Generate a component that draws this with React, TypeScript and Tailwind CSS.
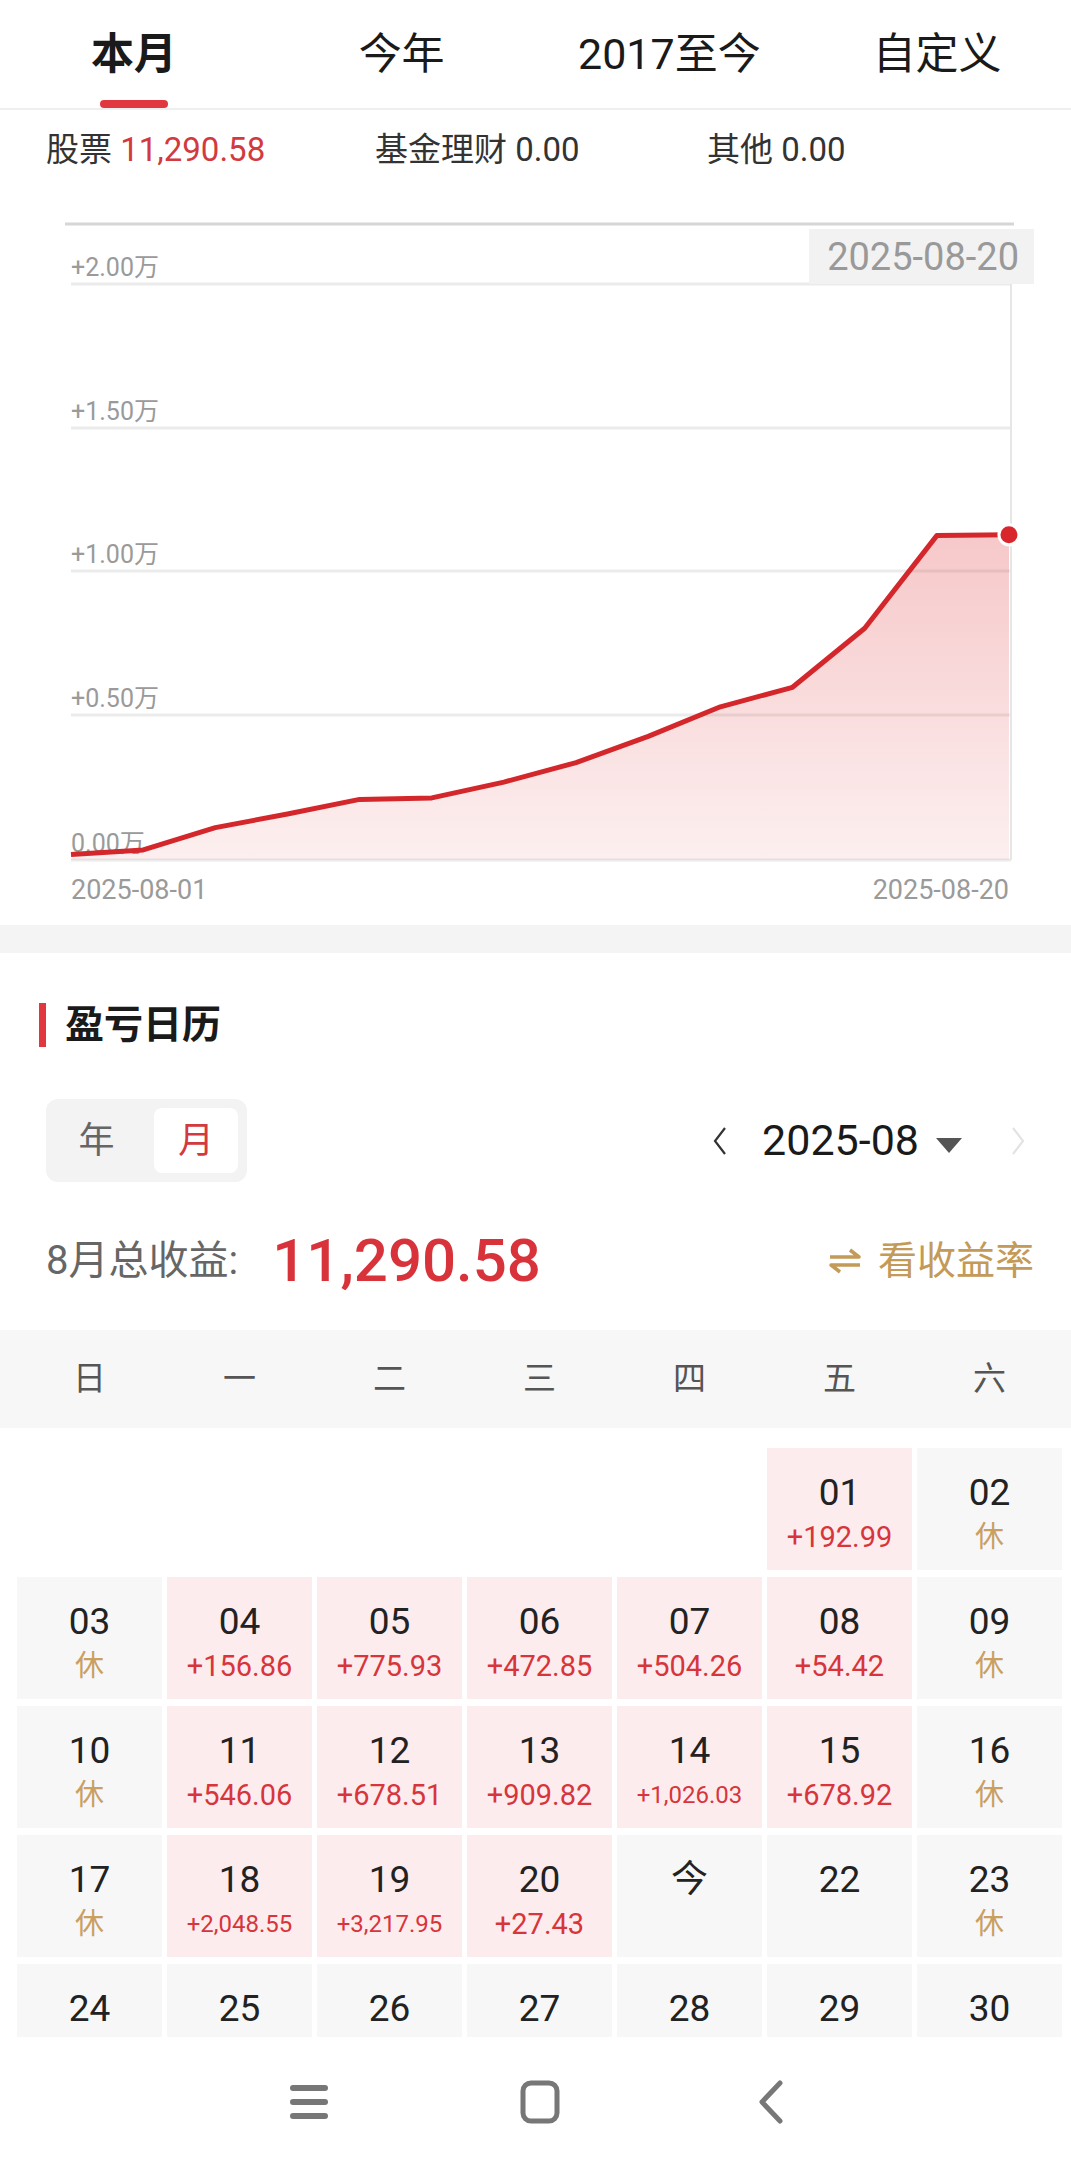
import React from "react";

const FONT = { fontFamily: 'Roboto, "Noto Sans CJK SC", sans-serif' };

const tabs = ["本月", "今年", "2017至今", "自定义"];

// daily profit for each trading day in Aug 2025
const profits: Record<number, string> = {
  1: "+192.99",
  4: "+156.86",
  5: "+775.93",
  6: "+472.85",
  7: "+504.26",
  8: "+54.42",
  11: "+546.06",
  12: "+678.51",
  13: "+909.82",
  14: "+1,026.03",
  15: "+678.92",
  18: "+2,048.55",
  19: "+3,217.95",
  20: "+27.43",
};

const weekdays = ["日", "一", "二", "三", "四", "五", "六"];

function Chart() {
  const values = Object.values(profits).map((v) => parseFloat(v.replace(/[+,]/g, "")));
  let sum = 0;
  const cum = values.map((v) => (sum += v));
  const baseY = 670;
  const toY = (v: number) => baseY - (v / 20000) * 576;
  const pts = cum.map((v, i) => [71 + i * 72.15, toY(v)] as const);
  const line = pts.map(([x, y], i) => `${i ? "L" : "M"}${x.toFixed(1)},${y.toFixed(1)}`).join(" ");
  const area = `${line} L${pts[pts.length - 1][0]},${baseY} L71,${baseY} Z`;
  const grid = [
    { y: 94, label: "+2.00万" },
    { y: 238, label: "+1.50万" },
    { y: 381, label: "+1.00万" },
    { y: 525, label: "+0.50万" },
    { y: 670, label: "0.00万" },
  ];
  const last = pts[pts.length - 1];

  return (
    <svg width="1071" height="735" viewBox="0 0 1071 735" className="block" style={FONT}>
      <defs>
        <linearGradient id="fill" x1="0" y1="0" x2="0" y2="1">
          <stop offset="0" stopColor="#e03a3e" stopOpacity="0.28" />
          <stop offset="1" stopColor="#e03a3e" stopOpacity="0.08" />
        </linearGradient>
      </defs>
      <line x1="65" y1="34" x2="1014" y2="34" stroke="#d6d6d6" strokeWidth="3" />
      {grid.map((g) => (
        <g key={g.label}>
          <line x1="71" y1={g.y} x2="1011" y2={g.y} stroke="#ebebeb" strokeWidth="3" />
          <text x="71" y={g.y - 8} fontSize="25" fill="#9a9a9a">
            {g.label}
          </text>
        </g>
      ))}
      <line x1="1011" y1="94" x2="1011" y2="670" stroke="#e6e6e6" strokeWidth="2" />
      <path d={area} fill="url(#fill)" />
      <path d={line} fill="none" stroke="#d4272b" strokeWidth="5" strokeLinejoin="round" />
      <circle cx={last[0]} cy={last[1]} r="10" fill="#d9262c" stroke="#ffffff" strokeWidth="3" />
      <rect x="809" y="39" width="225" height="55" fill="#f2f2f2" />
      <text x="1019" y="80" fontSize="38" fill="#999999" textAnchor="end">
        2025-08-20
      </text>
      <text x="71" y="709" fontSize="27" fill="#9a9a9a">
        2025-08-01
      </text>
      <text x="1009" y="709" fontSize="27" fill="#9a9a9a" textAnchor="end">
        2025-08-20
      </text>
    </svg>
  );
}

function DayCell({ day }: { day: number | null }) {
  if (day === null) return <div className="h-[122px]" />;
  const profit = profits[day];
  const weekday = (day + 4) % 7;
  const rest = (weekday === 0 || weekday === 6) && day < 24;
  const today = day === 21;
  const small = profit && profit.length > 8;

  return (
    <div
      className={`flex h-[122px] flex-col items-center pt-[27px] ${profit ? "bg-[#fdeced]" : "bg-[#f7f7f7]"}`}
    >
      <div className="flex h-[34px] items-center text-[37px] leading-none text-[#222]">
        {today ? "今" : String(day).padStart(2, "0")}
      </div>
      <div className="mt-[10px] flex h-[36px] items-center leading-none">
        {profit && (
          <span className={`${small ? "text-[24px]" : "text-[29px]"} text-[#d7353b]`}>{profit}</span>
        )}
        {!profit && rest && <span className="text-[29px] text-[#c9a062]">休</span>}
      </div>
    </div>
  );
}

export default function App() {
  const cells: (number | null)[] = [null, null, null, null, null];
  for (let d = 1; d <= 30; d++) cells.push(d);

  return (
    <div className="flex h-[2173px] w-[1071px] flex-col overflow-hidden bg-white" style={FONT}>
      <div className="min-h-0 flex-1 overflow-hidden">
        {/* period tabs */}
        <div className="grid h-[110px] grid-cols-4 border-b-2 border-[#efefef]">
          {tabs.map((t, i) => (
            <div key={t} className="flex flex-col items-center pt-[33px]">
              <span
                className={`text-[43px] leading-none text-[#1a1a1a] ${i === 0 ? "font-bold" : ""}`}
              >
                {t}
              </span>
              {i === 0 && <span className="mt-auto h-[8px] w-[68px] rounded-full bg-[#e0383e]" />}
            </div>
          ))}
        </div>

        {/* breakdown */}
        <div className="flex h-[80px] items-center pl-[46px] text-[33px] text-[#333]">
          <div className="w-[329px]">
            股票 <span className="text-[#d23a40]">11,290.58</span>
          </div>
          <div className="w-[332px]">基金理财 0.00</div>
          <div>其他 0.00</div>
        </div>

        <Chart />

        <div className="h-[28px] bg-[#f4f4f4]" />

        {/* calendar title */}
        <div className="flex items-center gap-[19px] pb-[52px] pl-[39px] pt-[50px]">
          <span className="h-[44px] w-[7px] bg-[#e0383e]" />
          <span className="text-[39px] font-bold leading-none text-[#1a1a1a]">盈亏日历</span>
        </div>

        {/* year / month switch */}
        <div className="flex h-[83px] items-center justify-between pl-[46px] pr-[45px]">
          <div className="flex h-[83px] w-[201px] rounded-[12px] bg-[#f3f3f3] p-[9px]">
            <span className="flex flex-1 items-center justify-center pr-[16px] text-[36px] text-[#666]">年</span>
            <span className="flex w-[84px] items-center justify-center rounded-[8px] bg-white text-[36px] text-[#d23a40]">
              月
            </span>
          </div>
          <div className="flex items-center">
            <svg width="16" height="32" viewBox="0 0 16 32">
              <polyline points="13,3 3,16 13,29" fill="none" stroke="#333" strokeWidth="2.2" />
            </svg>
            <span className="ml-[34px] text-[43px] leading-none text-[#1a1a1a]">2025-08</span>
            <svg width="30" height="20" viewBox="0 0 30 20" className="ml-[15px] mt-[8px]">
              <polygon points="2,3 28,3 15,18" fill="#555" />
            </svg>
            <svg width="16" height="32" viewBox="0 0 16 32" className="ml-[46px]">
              <polyline points="3,3 13,16 3,29" fill="none" stroke="#e3e3e3" strokeWidth="2.2" />
            </svg>
          </div>
        </div>

        {/* month total */}
        <div className="flex h-[148px] items-center justify-between pl-[46px] pr-[37px] pt-[10px]">
          <div className="flex items-center">
            <span className="text-[40px] text-[#666]">8月总收益:</span>
            <span className="ml-[34px] text-[60px] font-medium leading-none text-[#d8323a]">11,290.58</span>
          </div>
          <div className="flex items-center text-[#c39a57]">
            <svg width="34" height="28" viewBox="0 0 34 28">
              <path d="M2 10 H31 L22 3" fill="none" stroke="currentColor" strokeWidth="3.5" strokeLinejoin="round" />
              <path d="M32 18 H3 L12 25" fill="none" stroke="currentColor" strokeWidth="3.5" strokeLinejoin="round" />
            </svg>
            <span className="ml-[16px] text-[39px]">看收益率</span>
          </div>
        </div>

        {/* weekday header */}
        <div className="grid h-[98px] grid-cols-7 items-center gap-x-[5px] bg-[#f7f7f7] pl-[17px] pr-[9px]">
          {weekdays.map((w) => (
            <span key={w} className="text-center text-[33px] text-[#555]">
              {w}
            </span>
          ))}
        </div>

        {/* days */}
        <div className="grid grid-cols-7 gap-x-[5px] gap-y-[7px] pl-[17px] pr-[9px] pt-[20px]">
          {cells.map((d, i) => (
            <DayCell key={i} day={d} />
          ))}
        </div>
      </div>

      {/* system navigation */}
      <div className="flex h-[136px] items-center justify-center bg-white pb-[6px] pl-[8px]">
        <div className="flex w-[231px] justify-center">
          <svg width="40" height="38" viewBox="0 0 40 38">
            <rect x="1" y="2" width="38" height="6" rx="3" fill="#777" />
            <rect x="1" y="16" width="38" height="6" rx="3" fill="#777" />
            <rect x="1" y="30" width="38" height="6" rx="3" fill="#777" />
          </svg>
        </div>
        <div className="flex w-[231px] justify-center">
          <svg width="40" height="44" viewBox="0 0 40 44">
            <rect x="3" y="3" width="34" height="38" rx="8" fill="none" stroke="#777" strokeWidth="5" />
          </svg>
        </div>
        <div className="flex w-[231px] justify-center">
          <svg width="28" height="44" viewBox="0 0 28 44">
            <polyline points="23,3 5,22 23,41" fill="none" stroke="#777" strokeWidth="5" strokeLinecap="round" strokeLinejoin="round" />
          </svg>
        </div>
      </div>
    </div>
  );
}
